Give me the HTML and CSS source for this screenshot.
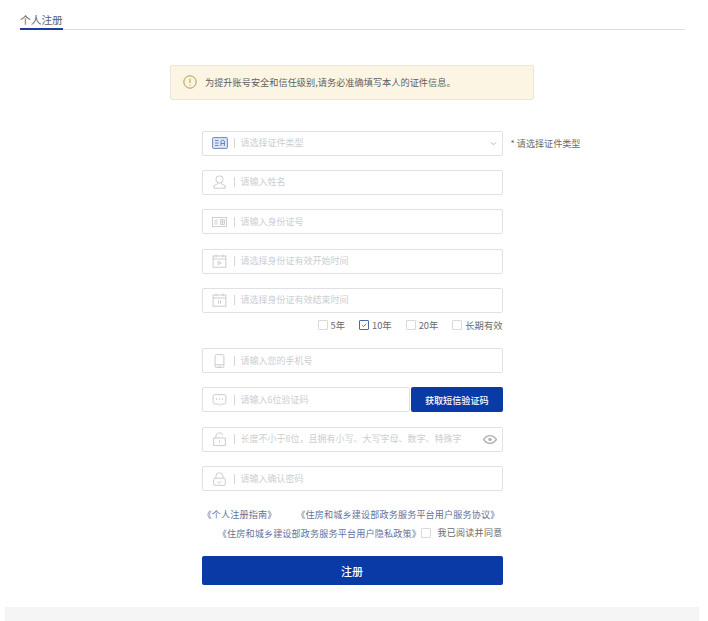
FILE: index.html
```html
<!DOCTYPE html>
<html lang="zh-CN">
<head>
<meta charset="utf-8">
<title>个人注册</title>
<link rel="stylesheet" href="styles.css">
</head>
<body>
<div class="page">
  <div class="tabs"><span class="tab">个人注册</span></div>
  <div class="alert">
    <svg class="alert-icon" viewBox="0 0 14 14"><circle cx="7" cy="7" r="6.2"/><path d="M7 3.6v4.4M7 9.6v1"/></svg>
    <span>为提升账号安全和信任级别,请务必准确填写本人的证件信息。</span>
  </div>
  <form class="form">
    <div class="row">
      <div class="field">
        <svg class="icon icon-type" viewBox="0 0 16 12"><rect x=".6" y=".6" width="14.8" height="10.8" rx="1"/><path d="M3 3.5h3.6M3 6h3.6M3 8.5h3.6M9 9V4l1.7-1 1.7 1v5M9 6.5h3.4"/></svg>
        <span class="sep"></span>
        <span class="ph">请选择证件类型</span>
        <svg class="chev" viewBox="0 0 8 5"><path d="M1 1l3 3 3-3"/></svg>
      </div>
      <span class="msg">* 请选择证件类型</span>
    </div>
    <div class="row">
      <div class="field">
        <svg class="icon" viewBox="0 0 14 14"><circle cx="7" cy="4.4" r="3.6"/><path d="M5.2 7.6v1.2L1.4 10.6v2.6h11.2v-2.6L8.8 8.8V7.6"/></svg>
        <span class="sep"></span>
        <span class="ph">请输入姓名</span>
      </div>
    </div>
    <div class="row">
      <div class="field">
        <svg class="icon" viewBox="0 0 16 12"><rect x=".6" y="1.1" width="14.8" height="9.8"/><path d="M2.6 4h3.4M2.6 6h3.4M2.6 8h3.4M9 3.4h4.4v5.2H9zM9 6h4.4M11.2 3.4v5.2"/></svg>
        <span class="sep"></span>
        <span class="ph">请输入身份证号</span>
      </div>
    </div>
    <div class="row">
      <div class="field">
        <svg class="icon" viewBox="0 0 14 14"><rect x=".6" y="2" width="12.8" height="11.2"/><path d="M.6 5h12.8M3.6.6v2.6M10.4.6v2.6M5.6 7.2v3.6l3-1.8z"/></svg>
        <span class="sep"></span>
        <span class="ph">请选择身份证有效开始时间</span>
      </div>
    </div>
    <div class="row">
      <div class="field">
        <svg class="icon" viewBox="0 0 14 14"><rect x=".6" y="2" width="12.8" height="11.2"/><path d="M.6 5h12.8M3.6.6v2.6M10.4.6v2.6M6 7.4v3.2M8 7.4v3.2"/></svg>
        <span class="sep"></span>
        <span class="ph">请选择身份证有效结束时间</span>
      </div>
    </div>
    <div class="terms">
      <label class="opt"><span class="box"></span>5年</label>
      <label class="opt"><span class="box checked"><svg viewBox="0 0 10 10"><path d="M2.4 5l2 2 3.2-3.6"/></svg></span>10年</label>
      <label class="opt"><span class="box"></span>20年</label>
      <label class="opt"><span class="box"></span>长期有效</label>
    </div>
    <div class="row">
      <div class="field">
        <svg class="icon icon-tall" viewBox="0 0 10 14"><rect x=".6" y=".6" width="8.8" height="12.8" rx="1"/><path d="M.6 10.8h8.8M4 12.2h2"/></svg>
        <span class="sep"></span>
        <span class="ph">请输入您的手机号</span>
      </div>
    </div>
    <div class="row code-row">
      <div class="field code-field">
        <svg class="icon icon-msg" viewBox="0 0 14 12"><path d="M2.4.6h9.2a1.8 1.8 0 0 1 1.8 1.8v5.8a1.8 1.8 0 0 1-1.8 1.8H8.4L7 11.4 5.6 10H2.4A1.8 1.8 0 0 1 .6 8.2V2.4A1.8 1.8 0 0 1 2.4.6z"/><path class="dots" d="M4 4.4v1.4M7 4.4v1.4M10 4.4v1.4"/></svg>
        <span class="sep"></span>
        <span class="ph">请输入6位验证码</span>
      </div>
      <button type="button" class="sms">获取短信验证码</button>
    </div>
    <div class="row">
      <div class="field">
        <svg class="icon" viewBox="0 0 14 14"><path d="M3.4 6V3.8a3.6 3.2 0 0 1 7 -.8"/><rect x="1.2" y="6" width="11.6" height="7.4"/><path d="M7 8.4v2.4"/></svg>
        <span class="sep"></span>
        <span class="ph">长度不小于8位，且拥有小写、大写字母、数字、特殊字</span>
        <svg class="eye" viewBox="0 0 14 9"><path class="eye-shape" d="M.6 4.5C2.4 1.8 4.6.6 7 .6s4.6 1.2 6.4 3.9C11.6 7.2 9.4 8.4 7 8.4S2.4 7.2.6 4.5z"/><circle cx="7" cy="4.5" r="1.7"/></svg>
      </div>
    </div>
    <div class="row">
      <div class="field">
        <svg class="icon" viewBox="0 0 14 14"><path d="M3.4 6.4V4.4a3.6 3.6 0 0 1 7.2 0v2"/><rect x="1.2" y="6.2" width="11.6" height="7.2" rx="1.4"/><path d="M4.8 10l1.6 1.4 2.8-2.4"/></svg>
        <span class="sep"></span>
        <span class="ph">请输入确认密码</span>
      </div>
    </div>
    <div class="links">
      <a class="link">《个人注册指南》</a>
      <a class="link">《住房和城乡建设部政务服务平台用户服务协议》</a>
    </div>
    <div class="agree">
      <a class="link">《住房和城乡建设部政务服务平台用户隐私政策》</a>
      <span class="box"></span>
      <span class="agree-text">我已阅读并同意</span>
    </div>
    <button type="button" class="submit">注册</button>
  </form>
  <div class="footer"></div>
</div>
</body>
</html>
```

FILE: styles.css
```css
* { box-sizing: border-box; }
html, body { margin: 0; padding: 0; background: #fff; }
body {
  width: 708px;
  height: 621px;
  overflow: hidden;
  font-family: "Noto Sans CJK SC", "Liberation Sans", sans-serif;
  font-size: 9px;
  color: #555;
}
.page {
  display: flex;
  flex-direction: column;
  align-items: center;
  height: 621px;
  padding: 0 9px 0 5px;
}
.tabs {
  align-self: stretch;
  margin: 13px 14px 0 15px;
  height: 17px;
  border-bottom: 1px solid #dcdee3;
  display: flex;
}
.tab {
  height: 17px;
  border-bottom: 2px solid #1c3f9e;
  font-size: 10.7px;
  line-height: 14px;
  color: #5a6270;
}
.alert {
  width: 364px;
  height: 36px;
  margin-top: 34.5px;
  padding-left: 12px;
  display: flex;
  align-items: center;
  gap: 8px;
  background: #fcf5e3;
  border: 1px solid #ece6d2;
  border-radius: 2px;
  font-size: 9.2px;
  color: #5f5f5f;
}
.alert-icon {
  width: 14px;
  height: 14px;
  fill: none;
  stroke: #b49a4e;
  stroke-width: 1;
}
.form {
  width: 301px;
  margin-top: 30.5px;
  display: flex;
  flex-direction: column;
}
.row {
  display: flex;
  width: 301px;
  height: 25px;
  margin-bottom: 14.3px;
}
.field {
  flex: 0 0 301px;
  min-width: 0;
  height: 25px;
  display: flex;
  align-items: center;
  padding-left: 9px;
  background: #fff;
  border: 1px solid #dfe1e5;
  border-radius: 2px;
}
.icon {
  flex: none;
  width: 15px;
  height: 14px;
  margin-right: 7px;
  fill: none;
  stroke: #c4c7cc;
  stroke-width: .9;
}
.icon-type {
  height: 12px;
  width: 16px;
  margin-right: 6px;
  stroke: #5c7cbc;
  fill: #dfe7f5;
}
.icon-msg { height: 12px; }
.dots { stroke-width: 1.1; stroke: #b9bcc2; }
.sep {
  flex: none;
  width: 1px;
  height: 10px;
  margin-right: 6px;
  background: #d4d6da;
}
.ph {
  flex: 1;
  min-width: 0;
  line-height: 14px;
  color: #cbced3;
  white-space: nowrap;
}
.chev {
  flex: none;
  width: 7px;
  height: 5px;
  margin: 0 5px 0 8px;
  fill: none;
  stroke: #a9adb3;
}
.eye {
  flex: none;
  width: 14px;
  height: 9px;
  margin: 0 5px 0 8px;
}
.eye-shape { fill: none; stroke: #aeb1b6; stroke-width: 1.4; }
.eye circle { fill: #aeb1b6; }
.msg {
  flex: none;
  margin-left: 8px;
  line-height: 25px;
  white-space: nowrap;
  font-size: 9.1px;
  color: #6b6b6b;
}
.terms {
  display: flex;
  justify-content: flex-end;
  gap: 14px;
  height: 12px;
  margin: -8px 0 17px;
  line-height: 12px;
  font-size: 9.3px;
  color: #6b6b6b;
}
.opt { display: flex; align-items: center; gap: 3px; }
.box {
  flex: none;
  display: block;
  width: 10px;
  height: 10px;
  border: 1px solid #d8dadf;
  border-radius: 1px;
  background: #fff;
}
.box.checked { border-color: #4a6aa8; }
.box.checked svg {
  display: block;
  width: 8px;
  height: 8px;
  fill: none;
  stroke: #3c5f9f;
}
.code-row { gap: 1.5px; }
.code-field { flex: 0 0 208px; }
.sms {
  flex: 1;
  height: 25px;
  padding: 0;
  border: 0;
  border-radius: 2px;
  background: #0a3aa6;
  color: #fff;
  font: 500 9.1px "Noto Sans CJK SC", sans-serif;
}
.links {
  display: flex;
  justify-content: space-between;
  height: 14px;
  margin-top: 1.7px;
  padding: 0 3px 0 1px;
  line-height: 14px;
}
.link {
  color: #62739a;
  white-space: nowrap;
  font-size: 9.1px;
  letter-spacing: .14px;
}
.agree {
  display: flex;
  align-items: center;
  justify-content: flex-end;
  height: 14px;
  margin-top: 5px;
  line-height: 14px;
}
.agree .box { margin: 0 6px 0 .5px; }
.agree-text { color: #6b6b6b; letter-spacing: .3px; }
.submit {
  height: 29px;
  margin-top: 16px;
  padding: 0;
  border: 0;
  border-radius: 2px;
  background: #0a3aa6;
  color: #fff;
  font: 500 11px "Noto Sans CJK SC", sans-serif;
}
.footer {
  align-self: stretch;
  flex: none;
  height: 14px;
  margin-top: 22px;
  background: #f5f5f6;
}
```
